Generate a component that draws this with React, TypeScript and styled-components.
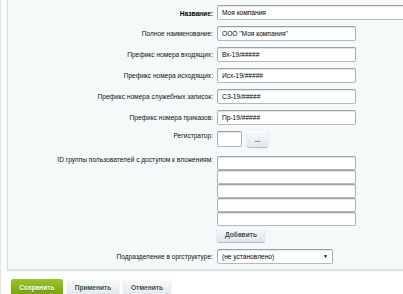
import React from "react";
import styled, { createGlobalStyle, css } from "styled-components";

const Global = createGlobalStyle`
  html, body { margin: 0; padding: 0; background: #fff; overflow: hidden; }
  body { font-family: "Liberation Sans", Arial, sans-serif; }
  * { box-sizing: border-box; }
`;

const Page = styled.div`
  width: 403px;
  height: 294px;
  border-left: 1px solid #e4e7e9;
  padding-left: 6px;
  overflow: hidden;
`;

const Panel = styled.div`
  background: #f5f9f9;
  border-left: 1px solid #d8dfe2;
  border-bottom: 1px solid #dde4e6;
  box-shadow: 0 1px 1px rgba(200, 210, 214, 0.6);
  padding: 5px 0 5px 0;
  display: flex;
  flex-direction: column;
`;

const Row = styled.div<{ $top?: number }>`
  display: flex;
  align-items: flex-start;
  margin-top: ${(p) => p.$top ?? 6}px;
  &:first-child { margin-top: 0; }
`;

const Label = styled.div<{ $bold?: boolean; $lh?: number }>`
  width: 205px;
  height: 15px;
  flex: none;
  margin-right: 4px;
  text-align: right;
  font-size: 6.6px;
  line-height: ${(p) => p.$lh ?? 15}px;
  color: #111;
  white-space: nowrap;
  ${(p) => p.$bold && css`font-weight: bold; color: #000;`}
`;

const Field = styled.div`
  display: flex;
  flex-direction: column;
  align-items: flex-start;
`;

const Inline = styled.div`
  display: flex;
  align-items: flex-start;
  gap: 5px;
`;

const Input = styled.div<{ $w?: number; $h?: number }>`
  width: ${(p) => p.$w ?? 139}px;
  height: ${(p) => p.$h ?? 15}px;
  flex: none;
  background: #fff;
  border: 1px solid #a6aeb4;
  border-color: #9aa3ab #a7afb5 #b3babf #a7afb5;
  border-radius: 2px;
  box-shadow: inset 0 1px 1px -0.5px rgba(180, 188, 191, 0.7);
  font-size: 6.6px;
  line-height: 13px;
  padding-left: 4px;
  color: #000;
  white-space: nowrap;
  overflow: hidden;
  display: flex;
  align-items: center;
`;

const Stack = styled.div`
  display: flex;
  flex-direction: column;
`;

const GrayButton = styled.div<{ $w: number; $h?: number }>`
  width: ${(p) => p.$w}px;
  height: ${(p) => p.$h ?? 15}px;
  flex: none;
  display: flex;
  align-items: center;
  justify-content: center;
  border-radius: 2px;
  background: linear-gradient(to bottom, #f9fbfb, #dfe7ea);
  box-shadow: 0 0 1px rgba(0, 0, 0, 0.2), 0 1px 1px rgba(0, 0, 0, 0.25),
    inset 0 1px #fff;
  font-size: 6.6px;
  font-weight: bold;
  color: #3f4b54;
  text-shadow: 0 1px rgba(255, 255, 255, 0.7);
`;

const Select = styled(Input)`
  justify-content: space-between;
  padding-right: 4px;
`;

const Arrow = styled.span`
  font-size: 5px;
  color: #000;
`;

const Footer = styled.div`
  display: flex;
  gap: 4px;
  padding: 9px 0 0 4px;
`;

const FootButton = styled.div<{ $w: number; $green?: boolean }>`
  width: ${(p) => p.$w}px;
  height: 17px;
  display: flex;
  align-items: center;
  justify-content: center;
  border-radius: 2px;
  font-size: 6.6px;
  font-weight: bold;
  ${(p) =>
    p.$green
      ? css`
          background: linear-gradient(to bottom, #9bc230, #76a300);
          color: #fff;
          text-shadow: 0 1px rgba(0, 0, 0, 0.25);
          box-shadow: 0 1px 1px rgba(0, 0, 0, 0.25);
        `
      : css`
          background: linear-gradient(to bottom, #f9fbfb, #dfe7ea);
          color: #3f4b54;
          text-shadow: 0 1px rgba(255, 255, 255, 0.7);
          box-shadow: 0 0 1px rgba(0, 0, 0, 0.2), 0 1px 1px rgba(0, 0, 0, 0.25),
            inset 0 1px #fff;
        `}
`;

const simpleRows: [string, string][] = [
  ["Полное наименование:", 'ООО "Моя компания"'],
  ["Префикс номера входящих:", "Вх-19/#####"],
  ["Префикс номера исходящих:", "Исх-19/#####"],
  ["Префикс номера служебных записок:", "СЗ-19/#####"],
  ["Префикс номера приказов:", "Пр-19/#####"],
];

export default function App() {
  return (
    <Page>
      <Global />
      <Panel>
        <Row>
          <Label $bold $lh={17}>Название:</Label>
          <Field>
            <Input $w={200}>Моя компания</Input>
          </Field>
        </Row>
        {simpleRows.map(([l, v]) => (
          <Row key={l}>
            <Label>{l}</Label>
            <Field>
              <Input>{v}</Input>
            </Field>
          </Row>
        ))}
        <Row>
          <Label $lh={10}>Регистратор:</Label>
          <Inline>
            <Input $w={25} $h={16} />
            <GrayButton $w={21} $h={16}>...</GrayButton>
          </Inline>
        </Row>
        <Row $top={9}>
          <Label $lh={8}>ID группы пользователей с доступом к вложениям:</Label>
          <Field>
            <Stack>
              {[0, 1, 2, 3, 4].map((i) => (
                <Input key={i} $h={14} />
              ))}
            </Stack>
            <Row $top={1}>
              <GrayButton $w={48}>Добавить</GrayButton>
            </Row>
          </Field>
        </Row>
        <Row $top={7}>
          <Label>Подразделение в оргструктуре:</Label>
          <Field>
            <Select $w={116}>
              <span>(не установлено)</span>
              <Arrow>▼</Arrow>
            </Select>
          </Field>
        </Row>
      </Panel>
      <Footer>
        <FootButton $w={52} $green>Сохранить</FootButton>
        <FootButton $w={52}>Применить</FootButton>
        <FootButton $w={48}>Отменить</FootButton>
      </Footer>
    </Page>
  );
}
